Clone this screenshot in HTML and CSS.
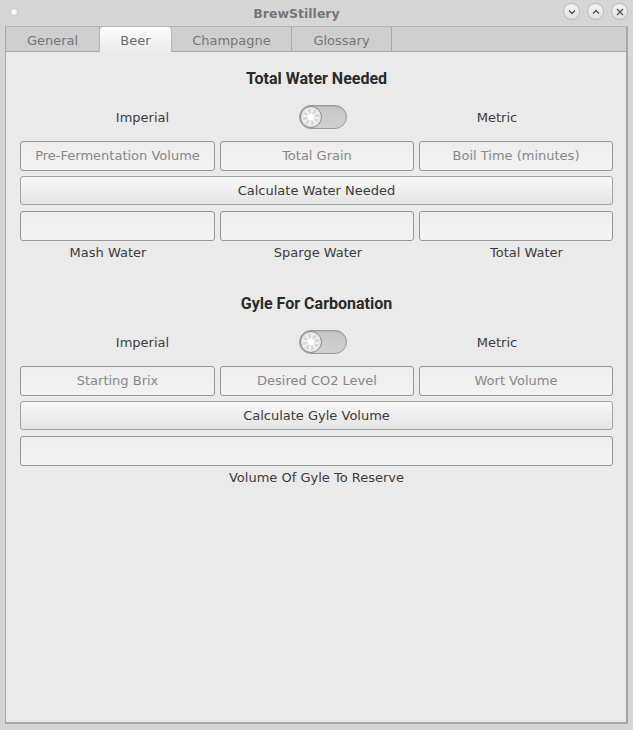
FILE: index.html
```html
<!DOCTYPE html>
<html>
<head>
<meta charset="utf-8">
<link rel="stylesheet" href="styles.css">
</head>
<body>
<div class="window">
  <div class="titlebar">
    <span class="dot"></span>
    <span class="title">BrewStillery</span>
    <div class="wbtns">
      <span class="wbtn"><svg width="8" height="6" viewBox="0 0 8 6"><path d="M1 1.5 L4 4.5 L7 1.5" fill="none" stroke="#555" stroke-width="1.4"/></svg></span>
      <span class="wbtn"><svg width="8" height="6" viewBox="0 0 8 6"><path d="M1 4.5 L4 1.5 L7 4.5" fill="none" stroke="#555" stroke-width="1.4"/></svg></span>
      <span class="wbtn"><svg width="8" height="8" viewBox="0 0 8 8"><path d="M1 1 L7 7 M7 1 L1 7" fill="none" stroke="#555" stroke-width="1.4"/></svg></span>
    </div>
  </div>
  <div class="notebook">
    <div class="tabs">
      <div class="tab t-general">General</div>
      <div class="tab t-beer active">Beer</div>
      <div class="tab t-champ">Champagne</div>
      <div class="tab t-gloss">Glossary</div>
    </div>
    <div class="page">
      <div class="section">
        <h2 class="heading">Total Water Needed</h2>
        <div class="unitrow">
          <div class="lbl">Imperial</div>
          <div class="swcell"><span class="switch"><span class="knob"></span></span></div>
          <div class="lbl">Metric</div>
        </div>
        <div class="row3">
          <div class="entry ph">Pre-Fermentation Volume</div>
          <div class="entry ph">Total Grain</div>
          <div class="entry ph">Boil Time (minutes)</div>
        </div>
        <div class="button">Calculate Water Needed</div>
        <div class="row3">
          <div class="entry"></div>
          <div class="entry"></div>
          <div class="entry"></div>
        </div>
        <div class="outlabels">
          <div class="lbl">Mash Water</div>
          <div class="lbl">Sparge Water</div>
          <div class="lbl">Total Water</div>
        </div>
      </div>
      <div class="section second">
        <h2 class="heading">Gyle For Carbonation</h2>
        <div class="unitrow">
          <div class="lbl">Imperial</div>
          <div class="swcell"><span class="switch"><span class="knob"></span></span></div>
          <div class="lbl">Metric</div>
        </div>
        <div class="row3">
          <div class="entry ph">Starting Brix</div>
          <div class="entry ph">Desired CO2 Level</div>
          <div class="entry ph">Wort Volume</div>
        </div>
        <div class="button">Calculate Gyle Volume</div>
        <div class="entry full"></div>
        <div class="lbl single">Volume Of Gyle To Reserve</div>
      </div>
    </div>
  </div>
</div>
</body>
</html>
```
FILE: styles.css
```css
html, body {
  margin: 0;
  padding: 0;
}
body {
  width: 633px;
  height: 730px;
  background: #d6d6d6;
  font-family: "DejaVu Sans", sans-serif;
  font-size: 13px;
  color: #3c3c3c;
  overflow: hidden;
}
.window {
  width: 633px;
  height: 730px;
  display: flex;
  flex-direction: column;
}
.titlebar {
  height: 26px;
  flex: none;
  position: relative;
  display: flex;
  align-items: center;
  justify-content: center;
  background: #d6d6d6;
}
.title {
  font-weight: bold;
  font-size: 12.5px;
  color: #777;
  margin-right: 40px;
  margin-top: 1px;
}
.dot {
  position: absolute;
  left: 10px;
  top: 8px;
  width: 6px;
  height: 6px;
  border-radius: 50%;
  background: #fafafa;
  border: 1px solid #c4c4c4;
}
.wbtns {
  position: absolute;
  right: 5px;
  top: 3px;
  display: flex;
  gap: 7px;
}
.wbtn {
  width: 15px;
  height: 15px;
  border-radius: 50%;
  border: 1px solid #b8b8b8;
  background: linear-gradient(#f4f4f4, #e2e2e2);
  display: flex;
  align-items: center;
  justify-content: center;
}
.notebook {
  margin: 0 5px 6px 5px;
  flex: 1;
  display: flex;
  flex-direction: column;
  border: 1px solid #a8a8a8;
  border-top: 1px solid #b4b4b4;
  border-right-width: 2px;
  border-bottom-width: 2px;
  border-left: 1px solid #a8a8a8;
}
.tabs {
  height: 24px;
  flex: none;
  display: flex;
  background: #cecece;
  border-bottom: 1px solid #a9a9a9;
}
.tab {
  height: 24px;
  line-height: 27px;
  text-align: center;
  color: #777;
  font-size: 13px;
  border-right: 1px solid #aaaaaa;
  box-sizing: border-box;
}
.t-general { width: 94px; }
.t-beer { width: 73px; }
.t-champ { width: 120px; }
.t-gloss { width: 100px; }
.tab.active {
  background: linear-gradient(#fcfcfc, #ececec);
  height: 25px;
  margin-bottom: -1px;
  border-radius: 4px 4px 0 0;
  border-left: 1px solid #b5b5b5;
  border-right: 1px solid #b5b5b5;
  margin-left: -1px;
  color: #6a6a6a;
}
.page {
  flex: 1;
  background: #eaeaea;
  padding: 0 13px 0 14px;
}
.section {
  display: flex;
  flex-direction: column;
}
.heading {
  margin: 0;
  height: 26px;
  padding-top: 14px;
  line-height: 26px;
  text-align: center;
  font-family: Roboto, "DejaVu Sans", sans-serif;
  font-weight: bold;
  font-size: 16px;
  color: #2a2a2a;
}
.second .heading {
  padding-top: 27px;
}
.unitrow {
  display: grid;
  grid-template-columns: 245px 116px 232px;
  height: 26px;
  margin-top: 12px;
  margin-bottom: 11px;
  align-items: center;
}
.lbl {
  text-align: center;
  color: #3c3c3c;
}
.swcell {
  display: flex;
  justify-content: center;
}
.switch {
  width: 46px;
  height: 22px;
  border-radius: 12px;
  border: 1px solid #9a9a9a;
  background: linear-gradient(#c6c6c6, #cfcfcf);
  display: flex;
  align-items: center;
  box-shadow: inset 0 1px 1px rgba(0,0,0,0.1);
}
.knob {
  width: 20px;
  height: 20px;
  border-radius: 50%;
  border: 1px solid #8d8d8d;
  background:
    radial-gradient(circle, #ffffff 0 3px, transparent 4px),
    repeating-conic-gradient(#f2f2f2 0 20deg, #d8d8d8 20deg 45deg);
  box-shadow: inset 0 0 0 2px #e8e8e8;
}
.row3 {
  display: grid;
  grid-template-columns: 195px 194px 194px;
  column-gap: 5px;
}
.entry {
  height: 28px;
  border: 1px solid #979797;
  border-radius: 3px;
  background: linear-gradient(#ededed, #f3f3f3);
  line-height: 28px;
  text-align: center;
  color: #888;
  font-size: 13px;
}
.button {
  height: 27px;
  margin: 5px 0 6px 0;
  border: 1px solid #a2a2a2;
  border-radius: 3px;
  background: linear-gradient(#f8f8f8, #e4e4e4);
  line-height: 27px;
  text-align: center;
  color: #3a3a3a;
}
.outlabels {
  display: grid;
  grid-template-columns: 176px 244px 173px;
  height: 22px;
  padding-top: 1px;
  line-height: 22px;
}
.lbl.single {
  height: 22px;
  padding-top: 1px;
  line-height: 22px;
}
```
